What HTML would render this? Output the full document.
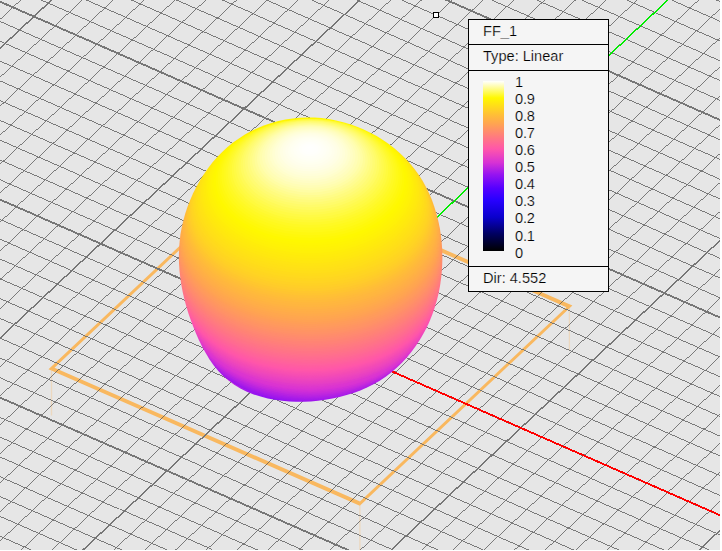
<!DOCTYPE html>
<html><head><meta charset="utf-8"><title>FF_1</title>
<style>
html,body{margin:0;padding:0;background:#fff;}
body{width:722px;height:551px;overflow:hidden;position:relative;font-family:"Liberation Sans",sans-serif;}
#view{position:absolute;left:0;top:0;width:720px;height:550px;display:block;}
#legend{position:absolute;left:468px;top:19px;width:139px;height:271px;background:#f5f5f5;border:1px solid #000;font-size:14.6px;color:#000;line-height:1;-webkit-text-stroke:0.2px #f5f5f5;}
#legend .dv{position:absolute;left:0;width:139px;height:1px;background:#000;}
#legend .t{position:absolute;left:14px;white-space:nowrap;}
#bar{position:absolute;left:14px;top:61px;width:21px;height:170px;background:linear-gradient(to bottom,#ffffff 0%,#fff800 10%,#ffbe37 20%,#ffa550 25%,#ff7a80 33%,#ff56aa 40%,#d732d4 48%,#9614f0 55%,#5500ff 63%,#2800ff 70%,#0a00cd 80%,#00005f 90%,#000000 100%);}
#labels span{position:absolute;left:46px;white-space:nowrap;letter-spacing:-0.2px;}
</style></head><body>

<svg id="view" width="720" height="550" viewBox="0 0 720 550">
<defs><mask id="sc" maskUnits="userSpaceOnUse" x="170" y="110" width="280" height="300"><path d="M299.8 117.7L307.1 117.4L314.4 117.6L321.6 118.1L328.8 119.1L336.0 120.4L343.1 122.2L350.1 124.3L357.0 126.7L363.7 129.5L370.3 132.7L376.7 136.1L382.9 139.9L388.8 144.0L394.6 148.5L400.0 153.2L405.2 158.2L410.0 163.4L414.5 169.0L418.7 174.8L422.6 180.8L426.0 187.1L429.2 193.5L432.0 200.1L434.4 206.9L436.5 213.8L438.3 220.9L439.8 228.0L440.9 235.2L441.7 242.5L442.2 249.8L442.4 257.1L442.2 264.4L441.8 271.7L441.0 278.9L440.0 286.1L438.6 293.2L436.9 300.2L434.8 307.2L432.5 314.0L429.8 320.7L426.9 327.2L423.5 333.6L419.9 339.8L415.9 345.8L411.7 351.6L407.1 357.2L402.2 362.6L397.0 367.6L391.5 372.3L385.7 376.7L379.7 380.7L373.5 384.3L367.0 387.6L360.3 390.4L353.5 392.9L346.6 395.1L339.5 396.9L332.4 398.5L325.2 399.7L318.1 400.7L310.9 401.4L303.7 401.7L296.5 401.8L289.3 401.5L282.1 400.8L274.9 399.8L267.7 398.4L260.6 396.6L253.7 394.4L246.9 391.7L240.4 388.5L234.2 384.8L228.5 380.6L223.1 375.9L218.1 370.7L213.6 365.2L209.4 359.3L205.7 353.1L202.2 346.7L199.0 340.2L196.0 333.5L193.3 326.8L190.7 320.0L188.3 313.1L186.2 306.1L184.3 299.1L182.7 292.0L181.4 284.9L180.3 277.8L179.5 270.7L179.0 263.5L178.9 256.3L179.0 249.2L179.6 242.0L180.4 234.8L181.7 227.7L183.3 220.7L185.2 213.7L187.5 206.7L190.2 199.9L193.1 193.3L196.4 186.7L199.9 180.4L203.8 174.2L208.0 168.3L212.4 162.6L217.2 157.1L222.2 152.0L227.5 147.1L233.0 142.6L238.9 138.4L244.9 134.5L251.2 131.0L257.8 127.9L264.5 125.2L271.3 122.9L278.3 121.0L285.4 119.5L292.6 118.4Z" fill="#fff"/></mask>
<linearGradient id="bg" gradientUnits="userSpaceOnUse" x1="0" y1="117" x2="0" y2="402"><stop offset="0.000" stop-color="#fff800"/><stop offset="0.221" stop-color="#ffcf27"/><stop offset="0.491" stop-color="#ff9562"/><stop offset="0.747" stop-color="#ff56aa"/><stop offset="0.923" stop-color="#c429dc"/><stop offset="0.975" stop-color="#9614f0"/><stop offset="1.000" stop-color="#8e11f2"/></linearGradient></defs>
<rect x="0" y="0" width="720" height="550" fill="#e6e6e6"/>
<path fill="#f9b85f" fill-rule="evenodd" d="M48.5 369.3L359.8 505.7L572.4 305.6L261.1 169.2ZM54.5 367.7L360.0 501.5L566.4 307.2L260.9 173.4Z"/>
<g stroke="#f5c890" stroke-opacity="0.45" stroke-width="1.3">
<line x1="51.5" y1="369.5" x2="51.5" y2="415.5"/>
<line x1="359.9" y1="504.6" x2="359.9" y2="550.6"/>
<line x1="569.4" y1="307.4" x2="569.4" y2="350.4"/>
</g>
<g shape-rendering="crispEdges" fill="none">
<path d="M-4.0 23.2L25.0 -4.0M-4.0 81.1L86.7 -4.0M-4.0 110.1L117.5 -4.0M-4.0 139.0L148.4 -4.0M-4.0 168.0L179.2 -4.0M-4.0 196.9L210.1 -4.0M-4.0 225.9L240.9 -4.0M-4.0 254.9L271.7 -4.0M-4.0 283.8L302.5 -4.0M-4.0 312.8L333.4 -4.0M-4.0 370.8L395.0 -4.0M-4.0 399.8L425.8 -4.0M-4.0 428.7L456.6 -4.0M-4.0 457.7L487.4 -4.0M-4.0 486.7L518.2 -4.0M-4.0 515.7L549.0 -4.0M-4.0 544.7L579.8 -4.0M17.0 554.0L610.6 -4.0M47.8 554.0L641.4 -4.0M109.5 554.0L702.9 -4.0M140.4 554.0L724.0 5.1M171.2 554.0L724.0 34.1M202.0 554.0L724.0 63.0M232.9 554.0L724.0 91.9M263.7 554.0L724.0 120.9M294.5 554.0L724.0 149.8M325.3 554.0L724.0 178.8M356.1 554.0L724.0 207.8M417.8 554.0L724.0 265.7M448.6 554.0L724.0 294.7M479.4 554.0L724.0 323.6M510.2 554.0L724.0 352.6M540.9 554.0L724.0 381.6M571.7 554.0L724.0 410.6M602.5 554.0L724.0 439.6M633.3 554.0L724.0 468.5M664.1 554.0L724.0 497.5" stroke="#505050" stroke-width="0.72"/>
<path d="M-4.0 534.5L40.6 554.0M-4.0 514.6L85.9 554.0M-4.0 494.8L131.1 554.0M-4.0 475.0L176.3 554.0M-4.0 455.2L221.5 554.0M-4.0 435.4L266.7 554.0M-4.0 415.6L311.9 554.0M-4.0 376.0L402.2 554.0M-4.0 356.2L447.4 554.0M-4.0 336.4L492.6 554.0M-4.0 316.6L537.7 554.0M-4.0 296.8L582.9 554.0M-4.0 277.0L628.0 554.0M-4.0 257.2L673.1 554.0M-4.0 237.4L718.2 554.0M-4.0 217.6L724.0 536.7M-4.0 178.0L724.0 497.2M-4.0 158.2L724.0 477.4M-4.0 138.4L724.0 457.7M-4.0 118.6L724.0 437.9M-4.0 98.8L724.0 418.1M-4.0 79.1L724.0 398.3M-4.0 59.3L724.0 378.6M-4.0 39.5L724.0 358.8M-4.0 19.7L724.0 339.1M32.1 -4.0L724.0 299.5M77.2 -4.0L724.0 279.8M122.2 -4.0L724.0 260.0M167.3 -4.0L724.0 240.3M212.4 -4.0L724.0 220.5M257.4 -4.0L724.0 200.7M302.4 -4.0L724.0 181.0M347.5 -4.0L724.0 161.2M392.5 -4.0L724.0 141.5M482.5 -4.0L724.0 102.0M527.5 -4.0L724.0 82.3M572.5 -4.0L724.0 62.5M617.5 -4.0L724.0 42.8M662.4 -4.0L724.0 23.0M707.4 -4.0L724.0 3.3" stroke="#717171" stroke-width="0.92"/>
<path d="M-4.0 52.1L55.8 -4.0M-4.0 341.8L364.2 -4.0M78.7 554.0L672.1 -4.0M386.9 554.0L724.0 236.7M694.8 554.0L724.0 526.5" stroke="#767676" stroke-width="1.43"/>
<path d="M-4.0 395.8L357.1 554.0M-4.0 197.8L724.0 517.0M-4.0 -0.1L724.0 319.3M437.5 -4.0L724.0 121.7" stroke="#767676" stroke-width="1.84"/>
<path d="M310.8 335.8L751.9 529.2" stroke="#ff0000" stroke-width="1.84"/>
<path d="M310.8 335.8L676.2 -7.8" stroke="#00ec00" stroke-width="1.43"/>
</g>
<g mask="url(#sc)">
<rect x="170" y="110" width="280" height="300" fill="url(#bg)"/>
<path d="M310.0 304.4A70.8 40.3 0 0 0 310.0 385.1A54.9 40.3 0 0 0 310.0 304.4Z" fill="#8e12f2"/>
<path d="M310.0 303.2A72.9 41.6 0 0 0 310.0 386.4A56.9 41.6 0 0 0 310.0 303.2Z" fill="#8f12f2"/>
<path d="M310.0 301.9A75.0 42.9 0 0 0 310.0 387.7A58.8 42.9 0 0 0 310.0 301.9Z" fill="#8f12f2"/>
<path d="M310.0 300.5A77.1 44.2 0 0 0 310.0 389.0A60.9 44.2 0 0 0 310.0 300.5Z" fill="#8f12f2"/>
<path d="M310.0 299.2A79.2 45.6 0 0 0 310.0 390.3A62.9 45.6 0 0 0 310.0 299.2Z" fill="#8f12f2"/>
<path d="M310.0 297.8A81.3 46.9 0 0 0 310.0 391.6A65.0 46.9 0 0 0 310.0 297.8Z" fill="#8f12f2"/>
<path d="M310.0 296.3A83.4 48.3 0 0 0 310.0 392.8A67.1 48.3 0 0 0 310.0 296.3Z" fill="#8f12f2"/>
<path d="M310.0 294.8A85.5 49.6 0 0 0 310.0 394.0A69.1 49.6 0 0 0 310.0 294.8Z" fill="#8f12f2"/>
<path d="M310.0 293.3A87.5 50.9 0 0 0 310.0 395.1A71.2 50.9 0 0 0 310.0 293.3Z" fill="#9012f1"/>
<path d="M310.0 291.7A89.6 52.2 0 0 0 310.0 396.2A73.3 52.2 0 0 0 310.0 291.7Z" fill="#9012f1"/>
<path d="M310.0 290.2A91.5 53.5 0 0 0 310.0 397.2A75.3 53.5 0 0 0 310.0 290.2Z" fill="#9012f1"/>
<path d="M310.0 288.6A93.4 54.8 0 0 0 310.0 398.1A77.3 54.8 0 0 0 310.0 288.6Z" fill="#9012f1"/>
<path d="M310.0 287.0A95.3 56.0 0 0 0 310.0 399.0A79.3 56.0 0 0 0 310.0 287.0Z" fill="#9012f1"/>
<path d="M310.0 285.4A97.1 57.2 0 0 0 310.0 399.7A81.2 57.2 0 0 0 310.0 285.4Z" fill="#9112f1"/>
<path d="M310.0 283.8A98.7 58.3 0 0 0 310.0 400.4A83.1 58.3 0 0 0 310.0 283.8Z" fill="#9113f1"/>
<path d="M310.0 282.2A100.3 59.4 0 0 0 310.0 401.0A84.9 59.4 0 0 0 310.0 282.2Z" fill="#9213f1"/>
<path d="M310.0 280.6A101.8 60.4 0 0 0 310.0 401.4A86.6 60.4 0 0 0 310.0 280.6Z" fill="#9313f1"/>
<path d="M310.0 279.0A103.1 61.4 0 0 0 310.0 401.7A88.3 61.4 0 0 0 310.0 279.0Z" fill="#9413f1"/>
<path d="M310.0 277.4A104.3 62.3 0 0 0 310.0 402.0A89.8 62.3 0 0 0 310.0 277.4Z" fill="#9414f0"/>
<path d="M310.0 275.9A105.4 63.1 0 0 0 310.0 402.1A91.2 63.1 0 0 0 310.0 275.9Z" fill="#9614f0"/>
<path d="M310.0 274.4A106.4 63.8 0 0 0 310.0 402.1A92.6 63.8 0 0 0 310.0 274.4Z" fill="#9714f0"/>
<path d="M310.0 272.9A107.4 64.5 0 0 0 310.0 402.0A93.9 64.5 0 0 0 310.0 272.9Z" fill="#9815ef"/>
<path d="M310.0 271.4A108.2 65.2 0 0 0 310.0 401.9A95.1 65.2 0 0 0 310.0 271.4Z" fill="#9a16ee"/>
<path d="M310.0 270.0A109.1 65.9 0 0 0 310.0 401.7A96.3 65.9 0 0 0 310.0 270.0Z" fill="#9b16ee"/>
<path d="M310.0 268.5A109.8 66.5 0 0 0 310.0 401.5A97.5 66.5 0 0 0 310.0 268.5Z" fill="#9d17ed"/>
<path d="M310.0 267.1A110.5 67.1 0 0 0 310.0 401.2A98.7 67.1 0 0 0 310.0 267.1Z" fill="#9e18ed"/>
<path d="M310.0 265.6A111.2 67.7 0 0 0 310.0 400.9A99.7 67.7 0 0 0 310.0 265.6Z" fill="#a018ec"/>
<path d="M310.0 264.2A111.8 68.2 0 0 0 310.0 400.6A100.8 68.2 0 0 0 310.0 264.2Z" fill="#a119eb"/>
<path d="M310.0 262.7A112.4 68.7 0 0 0 310.0 400.2A101.8 68.7 0 0 0 310.0 262.7Z" fill="#a31aea"/>
<path d="M310.0 261.3A113.0 69.2 0 0 0 310.0 399.7A102.8 69.2 0 0 0 310.0 261.3Z" fill="#a61be9"/>
<path d="M310.0 259.9A113.5 69.7 0 0 0 310.0 399.3A103.8 69.7 0 0 0 310.0 259.9Z" fill="#a81ce8"/>
<path d="M310.0 258.5A114.0 70.2 0 0 0 310.0 398.8A104.8 70.2 0 0 0 310.0 258.5Z" fill="#ab1ee7"/>
<path d="M310.0 257.0A114.5 70.6 0 0 0 310.0 398.3A105.7 70.6 0 0 0 310.0 257.0Z" fill="#ae1fe6"/>
<path d="M310.0 255.6A115.0 71.1 0 0 0 310.0 397.7A106.6 71.1 0 0 0 310.0 255.6Z" fill="#b120e4"/>
<path d="M310.0 254.2A115.4 71.5 0 0 0 310.0 397.2A107.5 71.5 0 0 0 310.0 254.2Z" fill="#b422e3"/>
<path d="M310.0 252.7A115.9 71.9 0 0 0 310.0 396.6A108.4 71.9 0 0 0 310.0 252.7Z" fill="#b723e2"/>
<path d="M310.0 251.3A116.3 72.4 0 0 0 310.0 396.0A109.3 72.4 0 0 0 310.0 251.3Z" fill="#ba25e0"/>
<path d="M310.0 249.8A116.8 72.8 0 0 0 310.0 395.4A110.2 72.8 0 0 0 310.0 249.8Z" fill="#bd26df"/>
<path d="M310.0 248.4A117.2 73.2 0 0 0 310.0 394.8A111.1 73.2 0 0 0 310.0 248.4Z" fill="#c128de"/>
<path d="M310.0 246.9A117.7 73.7 0 0 0 310.0 394.2A112.0 73.7 0 0 0 310.0 246.9Z" fill="#c429dc"/>
<path d="M310.0 245.4A118.2 74.1 0 0 0 310.0 393.6A113.0 74.1 0 0 0 310.0 245.4Z" fill="#c72bdb"/>
<path d="M310.0 243.8A118.6 74.6 0 0 0 310.0 393.0A113.9 74.6 0 0 0 310.0 243.8Z" fill="#ca2cda"/>
<path d="M310.0 242.3A119.1 75.0 0 0 0 310.0 392.3A114.8 75.0 0 0 0 310.0 242.3Z" fill="#cd2dd8"/>
<path d="M310.0 240.8A119.6 75.4 0 0 0 310.0 391.7A115.7 75.4 0 0 0 310.0 240.8Z" fill="#d02fd7"/>
<path d="M310.0 239.3A120.0 75.9 0 0 0 310.0 391.0A116.5 75.9 0 0 0 310.0 239.3Z" fill="#d430d5"/>
<path d="M310.0 237.7A120.4 76.3 0 0 0 310.0 390.3A117.3 76.3 0 0 0 310.0 237.7Z" fill="#d732d4"/>
<path d="M310.0 236.2A120.8 76.6 0 0 0 310.0 389.5A118.1 76.6 0 0 0 310.0 236.2Z" fill="#d934d2"/>
<path d="M310.0 234.7A121.2 77.0 0 0 0 310.0 388.7A118.9 77.0 0 0 0 310.0 234.7Z" fill="#db35d0"/>
<path d="M310.0 233.2A121.6 77.4 0 0 0 310.0 387.9A119.7 77.4 0 0 0 310.0 233.2Z" fill="#dd37ce"/>
<path d="M310.0 231.6A122.0 77.8 0 0 0 310.0 387.1A120.5 77.8 0 0 0 310.0 231.6Z" fill="#de39cc"/>
<path d="M310.0 230.1A122.4 78.1 0 0 0 310.0 386.3A121.2 78.1 0 0 0 310.0 230.1Z" fill="#e03aca"/>
<path d="M310.0 228.5A122.7 78.5 0 0 0 310.0 385.4A121.9 78.5 0 0 0 310.0 228.5Z" fill="#e23cc8"/>
<path d="M310.0 227.0A123.1 78.8 0 0 0 310.0 384.6A122.6 78.8 0 0 0 310.0 227.0Z" fill="#e43ec6"/>
<ellipse cx="310.0" cy="304.6" rx="123.3" ry="79.1" fill="#e640c4"/>
<ellipse cx="310.0" cy="303.3" rx="123.8" ry="79.4" fill="#e841c2"/>
<ellipse cx="310.0" cy="302.1" rx="124.3" ry="79.7" fill="#ea43c0"/>
<ellipse cx="310.0" cy="300.8" rx="124.8" ry="80.1" fill="#ec45be"/>
<ellipse cx="310.0" cy="299.5" rx="125.3" ry="80.4" fill="#ee47bc"/>
<ellipse cx="310.0" cy="298.3" rx="125.7" ry="80.6" fill="#f049ba"/>
<ellipse cx="310.0" cy="297.0" rx="126.2" ry="80.9" fill="#f24ab7"/>
<ellipse cx="310.0" cy="295.6" rx="126.6" ry="81.2" fill="#f44cb5"/>
<ellipse cx="310.0" cy="294.3" rx="127.0" ry="81.5" fill="#f64eb3"/>
<ellipse cx="310.0" cy="293.0" rx="127.5" ry="81.8" fill="#f850b1"/>
<ellipse cx="310.0" cy="291.6" rx="127.9" ry="82.0" fill="#fa52af"/>
<ellipse cx="310.0" cy="290.2" rx="128.3" ry="82.3" fill="#fc54ad"/>
<ellipse cx="310.0" cy="288.8" rx="128.7" ry="82.6" fill="#ff56aa"/>
<ellipse cx="310.0" cy="287.4" rx="129.1" ry="82.8" fill="#ff58a8"/>
<ellipse cx="310.0" cy="286.0" rx="129.5" ry="83.1" fill="#ff5aa5"/>
<ellipse cx="310.0" cy="284.6" rx="129.9" ry="83.3" fill="#ff5ca3"/>
<ellipse cx="310.0" cy="283.1" rx="130.3" ry="83.6" fill="#ff5ea0"/>
<ellipse cx="310.0" cy="281.6" rx="130.6" ry="83.8" fill="#ff619e"/>
<ellipse cx="310.0" cy="280.1" rx="131.0" ry="84.0" fill="#ff639b"/>
<ellipse cx="310.0" cy="278.6" rx="131.3" ry="84.2" fill="#ff6598"/>
<ellipse cx="310.0" cy="277.1" rx="131.6" ry="84.4" fill="#ff6796"/>
<ellipse cx="310.0" cy="275.6" rx="131.9" ry="84.6" fill="#ff6a93"/>
<ellipse cx="310.0" cy="274.0" rx="132.1" ry="84.8" fill="#ff6c90"/>
<ellipse cx="310.0" cy="272.5" rx="132.4" ry="84.9" fill="#ff6e8e"/>
<ellipse cx="310.0" cy="270.9" rx="132.5" ry="85.0" fill="#ff718b"/>
<ellipse cx="310.0" cy="269.3" rx="132.7" ry="85.1" fill="#ff7388"/>
<ellipse cx="310.0" cy="267.7" rx="132.8" ry="85.2" fill="#ff7585"/>
<ellipse cx="310.0" cy="266.1" rx="132.9" ry="85.2" fill="#ff7883"/>
<ellipse cx="310.0" cy="264.4" rx="132.9" ry="85.3" fill="#ff7a80"/>
<ellipse cx="310.0" cy="262.8" rx="132.9" ry="85.3" fill="#ff7d7d"/>
<ellipse cx="310.0" cy="261.1" rx="132.9" ry="85.3" fill="#ff7f7a"/>
<ellipse cx="310.0" cy="259.5" rx="132.9" ry="85.3" fill="#ff8277"/>
<ellipse cx="310.0" cy="257.8" rx="132.9" ry="85.2" fill="#ff8474"/>
<ellipse cx="310.0" cy="256.1" rx="132.8" ry="85.2" fill="#ff8772"/>
<ellipse cx="310.0" cy="254.4" rx="132.7" ry="85.1" fill="#ff8a6f"/>
<ellipse cx="310.0" cy="252.7" rx="132.6" ry="85.0" fill="#ff8c6c"/>
<ellipse cx="310.0" cy="250.9" rx="132.4" ry="85.0" fill="#ff8f69"/>
<ellipse cx="310.0" cy="249.2" rx="132.3" ry="84.9" fill="#ff9266"/>
<ellipse cx="310.0" cy="247.4" rx="132.1" ry="84.7" fill="#ff9463"/>
<ellipse cx="310.0" cy="245.6" rx="131.9" ry="84.6" fill="#ff9760"/>
<ellipse cx="310.0" cy="243.8" rx="131.6" ry="84.4" fill="#ff9a5d"/>
<ellipse cx="310.0" cy="242.0" rx="131.3" ry="84.2" fill="#ff9c5a"/>
<ellipse cx="310.0" cy="240.2" rx="131.0" ry="84.0" fill="#ff9f56"/>
<ellipse cx="310.0" cy="238.4" rx="130.6" ry="83.8" fill="#ffa253"/>
<ellipse cx="310.0" cy="236.6" rx="130.2" ry="83.5" fill="#ffa550"/>
<ellipse cx="310.0" cy="234.8" rx="129.8" ry="83.3" fill="#ffa74e"/>
<ellipse cx="310.0" cy="233.0" rx="129.3" ry="83.0" fill="#ffaa4b"/>
<ellipse cx="310.0" cy="231.1" rx="128.8" ry="82.6" fill="#ffad48"/>
<ellipse cx="310.0" cy="229.3" rx="128.2" ry="82.3" fill="#ffaf46"/>
<ellipse cx="310.0" cy="227.5" rx="127.6" ry="81.9" fill="#ffb243"/>
<ellipse cx="310.0" cy="225.7" rx="127.0" ry="81.4" fill="#ffb540"/>
<ellipse cx="310.0" cy="223.8" rx="126.3" ry="81.0" fill="#ffb73e"/>
<ellipse cx="310.0" cy="222.0" rx="125.5" ry="80.5" fill="#ffba3b"/>
<ellipse cx="310.0" cy="220.2" rx="124.8" ry="80.0" fill="#ffbd38"/>
<ellipse cx="310.0" cy="218.4" rx="124.0" ry="79.6" fill="#ffc035"/>
<ellipse cx="310.0" cy="216.5" rx="123.2" ry="79.1" fill="#ffc431"/>
<ellipse cx="310.0" cy="214.7" rx="122.4" ry="78.5" fill="#ffc72e"/>
<ellipse cx="310.0" cy="212.9" rx="121.5" ry="78.0" fill="#ffcb2b"/>
<ellipse cx="310.0" cy="211.0" rx="120.6" ry="77.4" fill="#ffce28"/>
<ellipse cx="310.0" cy="209.2" rx="119.7" ry="76.8" fill="#ffd125"/>
<ellipse cx="310.0" cy="207.3" rx="118.7" ry="76.1" fill="#ffd423"/>
<ellipse cx="310.0" cy="205.5" rx="117.7" ry="75.5" fill="#ffd620"/>
<ellipse cx="310.0" cy="203.7" rx="116.6" ry="74.8" fill="#ffd91e"/>
<ellipse cx="310.0" cy="201.9" rx="115.5" ry="74.1" fill="#ffdb1b"/>
<ellipse cx="310.0" cy="200.1" rx="114.3" ry="73.3" fill="#ffde19"/>
<ellipse cx="310.0" cy="198.3" rx="113.1" ry="72.5" fill="#ffe017"/>
<ellipse cx="310.0" cy="196.6" rx="111.8" ry="71.7" fill="#ffe215"/>
<ellipse cx="310.0" cy="195.0" rx="110.5" ry="70.9" fill="#ffe413"/>
<ellipse cx="310.0" cy="193.3" rx="109.1" ry="70.0" fill="#ffe710"/>
<ellipse cx="310.0" cy="191.7" rx="107.6" ry="69.0" fill="#ffe90e"/>
<ellipse cx="310.0" cy="190.2" rx="106.1" ry="68.1" fill="#ffeb0c"/>
<ellipse cx="310.0" cy="188.6" rx="104.6" ry="67.1" fill="#ffed0a"/>
<ellipse cx="310.0" cy="187.1" rx="103.0" ry="66.1" fill="#fff008"/>
<ellipse cx="310.0" cy="185.6" rx="101.3" ry="65.0" fill="#fff206"/>
<ellipse cx="310.0" cy="184.1" rx="99.6" ry="63.9" fill="#fff404"/>
<ellipse cx="310.0" cy="182.7" rx="97.9" ry="62.8" fill="#fff602"/>
<ellipse cx="310.0" cy="181.3" rx="96.1" ry="61.7" fill="#fff800"/>
<ellipse cx="310.0" cy="179.9" rx="94.3" ry="60.5" fill="#fff805"/>
<ellipse cx="310.0" cy="178.6" rx="92.4" ry="59.3" fill="#fff80b"/>
<ellipse cx="310.0" cy="177.2" rx="90.5" ry="58.1" fill="#fff811"/>
<ellipse cx="310.0" cy="175.9" rx="88.6" ry="56.8" fill="#fff917"/>
<ellipse cx="310.0" cy="174.6" rx="86.6" ry="55.6" fill="#fff91d"/>
<ellipse cx="310.0" cy="173.4" rx="84.6" ry="54.3" fill="#fff924"/>
<ellipse cx="310.0" cy="172.1" rx="82.5" ry="52.9" fill="#fff92c"/>
<ellipse cx="310.0" cy="170.9" rx="80.5" ry="51.6" fill="#fff934"/>
<ellipse cx="310.0" cy="169.7" rx="78.3" ry="50.3" fill="#fffa3d"/>
<ellipse cx="310.0" cy="168.6" rx="76.2" ry="48.9" fill="#fffa45"/>
<ellipse cx="310.0" cy="167.4" rx="74.0" ry="47.5" fill="#fffa4e"/>
<ellipse cx="310.0" cy="166.4" rx="71.8" ry="46.0" fill="#fffa57"/>
<ellipse cx="310.0" cy="165.3" rx="69.5" ry="44.6" fill="#fffb61"/>
<ellipse cx="310.0" cy="164.2" rx="67.3" ry="43.1" fill="#fffb6a"/>
<ellipse cx="310.0" cy="163.2" rx="65.0" ry="41.7" fill="#fffb73"/>
<ellipse cx="310.0" cy="162.3" rx="62.6" ry="40.2" fill="#fffb7d"/>
<ellipse cx="310.0" cy="161.3" rx="60.2" ry="38.6" fill="#fffc86"/>
<ellipse cx="310.0" cy="160.4" rx="57.8" ry="37.1" fill="#fffc90"/>
<ellipse cx="310.0" cy="159.5" rx="55.4" ry="35.6" fill="#fffc9a"/>
<ellipse cx="310.0" cy="158.7" rx="53.0" ry="34.0" fill="#fffda4"/>
<ellipse cx="310.0" cy="157.9" rx="50.5" ry="32.4" fill="#fffdae"/>
<ellipse cx="310.0" cy="157.1" rx="48.0" ry="30.8" fill="#fffdb6"/>
<ellipse cx="310.0" cy="156.3" rx="45.5" ry="29.2" fill="#fffdbe"/>
<ellipse cx="310.0" cy="155.6" rx="43.0" ry="27.6" fill="#fffdc5"/>
<ellipse cx="310.0" cy="154.8" rx="40.4" ry="25.9" fill="#fffecc"/>
<ellipse cx="310.0" cy="154.2" rx="37.8" ry="24.3" fill="#fffed3"/>
<ellipse cx="310.0" cy="153.5" rx="35.2" ry="22.6" fill="#fffed9"/>
<ellipse cx="310.0" cy="152.9" rx="32.6" ry="20.9" fill="#fffede"/>
<ellipse cx="310.0" cy="152.3" rx="30.0" ry="19.2" fill="#fffee4"/>
<ellipse cx="310.0" cy="151.8" rx="27.3" ry="17.5" fill="#fffee8"/>
<ellipse cx="310.0" cy="151.3" rx="24.7" ry="15.8" fill="#fffeec"/>
<ellipse cx="310.0" cy="150.8" rx="22.0" ry="14.1" fill="#ffffef"/>
<ellipse cx="310.0" cy="150.3" rx="19.3" ry="12.4" fill="#fffff2"/>
<ellipse cx="310.0" cy="149.9" rx="16.6" ry="10.6" fill="#fffff5"/>
<ellipse cx="310.0" cy="149.5" rx="13.8" ry="8.9" fill="#fffff7"/>
<ellipse cx="310.0" cy="149.2" rx="11.1" ry="7.1" fill="#fffffa"/>
<ellipse cx="310.0" cy="148.9" rx="8.3" ry="5.3" fill="#fffffc"/>
<ellipse cx="310.0" cy="148.6" rx="5.6" ry="3.6" fill="#fffffd"/>
<ellipse cx="310.0" cy="148.3" rx="2.8" ry="1.8" fill="#fffffe"/>
</g>
<rect x="433.5" y="12.5" width="5" height="5" fill="#fff" stroke="#000" stroke-width="1" shape-rendering="crispEdges"/>
</svg>
<div id="legend">
<div class="dv" style="top:24px"></div><div class="dv" style="top:50px"></div><div class="dv" style="top:246px"></div>
<div class="t" style="top:4px">FF_1</div><div class="t" style="top:29.3px">Type: Linear</div><div class="t" style="top:251px">Dir: 4.552</div>
<div id="bar"></div><div id="labels">
<span style="top:55.0px">1</span>
<span style="top:72.0px">0.9</span>
<span style="top:89.1px">0.8</span>
<span style="top:106.2px">0.7</span>
<span style="top:123.2px">0.6</span>
<span style="top:140.2px">0.5</span>
<span style="top:157.3px">0.4</span>
<span style="top:174.4px">0.3</span>
<span style="top:191.4px">0.2</span>
<span style="top:208.5px">0.1</span>
<span style="top:225.5px">0</span>
</div></div>
</body></html>
